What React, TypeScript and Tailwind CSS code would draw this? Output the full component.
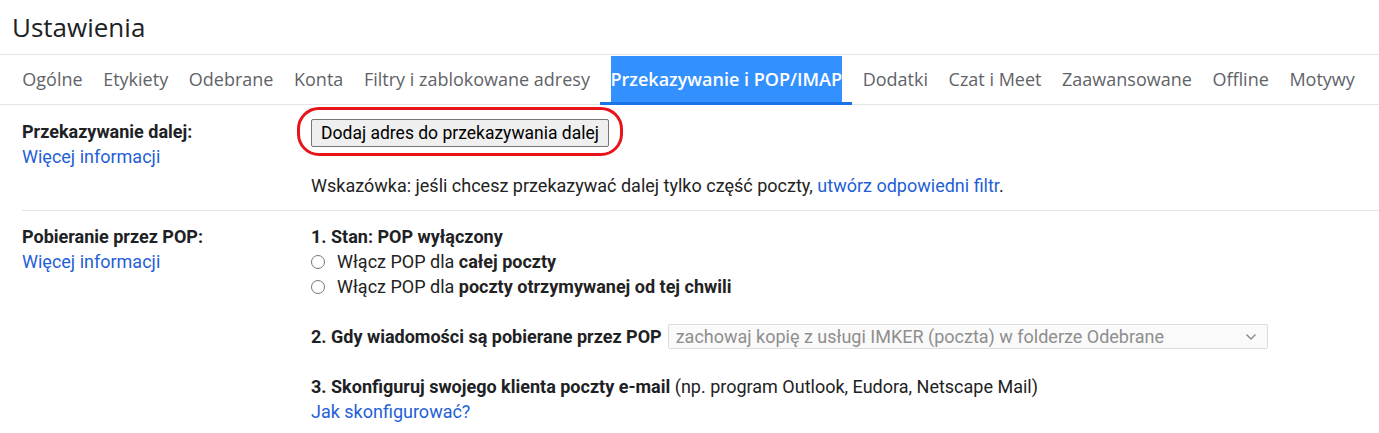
import React from "react";

const tabs = [
  "Ogólne",
  "Etykiety",
  "Odebrane",
  "Konta",
  "Filtry i zablokowane adresy",
  "Przekazywanie i POP/IMAP",
  "Dodatki",
  "Czat i Meet",
  "Zaawansowane",
  "Offline",
  "Motywy",
];

const ACTIVE = "Przekazywanie i POP/IMAP";

function Radio() {
  return (
    <span className="mr-[12px] inline-block h-[14px] w-[14px] shrink-0 rounded-full border border-[#767676] bg-white" />
  );
}

export default function App() {
  return (
    <div className="min-h-[433px] w-[1379px] bg-white font-['Roboto',sans-serif] text-[18px] leading-[25px] text-[#222]">
      {/* title */}
      <div className="flex h-[55px] items-center border-b border-[#e5e5e5] pl-[12px]">
        <h1 className="font-['Open_Sans',sans-serif] text-[26px] font-normal text-[#202124]">
          Ustawienia
        </h1>
      </div>

      {/* tabs */}
      <div className="flex h-[50px] items-stretch border-b border-[#e5e5e5] pl-[12px] font-['Open_Sans',sans-serif] text-[18px]">
        {tabs.map((t) =>
          t === ACTIVE ? (
            <div key={t} className="relative flex items-center px-[10.3px]">
              <span className="flex h-[47px] items-center bg-[#3391ff] font-semibold text-white">
                {t}
              </span>
              <span className="absolute bottom-[-1px] left-0 right-0 h-[3px] bg-[#1a73e8]" />
            </div>
          ) : (
            <div key={t} className="flex items-center px-[10.3px] text-[#5f6368]">
              {t}
            </div>
          )
        )}
      </div>

      {/* forwarding */}
      <div className="ml-[22px] flex border-b border-[#e3e3e3] pb-[12px] pt-[14px]">
        <div className="w-[289px] shrink-0">
          <div className="font-bold text-[#202124]">Przekazywanie dalej:</div>
          <a className="text-[#1f5fd6]">Więcej informacji</a>
        </div>
        <div>
          <div className="relative inline-block">
            <button className="h-[28px] w-[298px] rounded-[2px] border border-[#767676] bg-[#efefef] text-[17.5px] leading-[26px] text-black">
              Dodaj adres do przekazywania dalej
            </button>
            <span className="pointer-events-none absolute -bottom-[9px] -left-[14px] -right-[14px] -top-[12px] rounded-[22px] border-[3px] border-[#e8141c]" />
          </div>
          <div className="mt-[26px]">
            Wskazówka: jeśli chcesz przekazywać dalej tylko część poczty,{" "}
            <a className="text-[#1f5fd6]">utwórz odpowiedni filtr</a>.
          </div>
        </div>
      </div>

      {/* POP */}
      <div className="ml-[22px] flex pt-[13px]">
        <div className="w-[289px] shrink-0">
          <div className="font-bold text-[#202124]">Pobieranie przez POP:</div>
          <a className="text-[#1f5fd6]">Więcej informacji</a>
        </div>
        <div>
          <div className="font-bold text-[#202124]">1. Stan: POP wyłączony</div>
          <div className="flex items-center">
            <Radio />
            <span>
              Włącz POP dla <b>całej poczty</b>
            </span>
          </div>
          <div className="flex items-center">
            <Radio />
            <span>
              Włącz POP dla <b>poczty otrzymywanej od tej chwili</b>
            </span>
          </div>
          <div className="h-[25px]" />
          <div className="flex items-center">
            <span className="font-bold text-[#202124]">
              2. Gdy wiadomości są pobierane przez POP
            </span>
            <div className="ml-[6px] flex h-[25px] w-[600px] items-center justify-between rounded-[2px] border border-[#dcdcdc] bg-[#fafafa] pl-[7px] pr-[10px] text-[#8e8e8e]">
              <span>zachowaj kopię z usługi IMKER (poczta) w folderze Odebrane</span>
              <svg width="12" height="8" viewBox="0 0 12 8" fill="none">
                <path d="M1.5 1.5l4.5 4.5 4.5-4.5" stroke="#8a8a8a" strokeWidth="1.4" />
              </svg>
            </div>
          </div>
          <div className="h-[25px]" />
          <div>
            <b className="text-[#202124]">3. Skonfiguruj swojego klienta poczty e-mail</b> (np.
            program Outlook, Eudora, Netscape Mail)
          </div>
          <a className="text-[#1f5fd6]">Jak skonfigurować?</a>
        </div>
      </div>
    </div>
  );
}
